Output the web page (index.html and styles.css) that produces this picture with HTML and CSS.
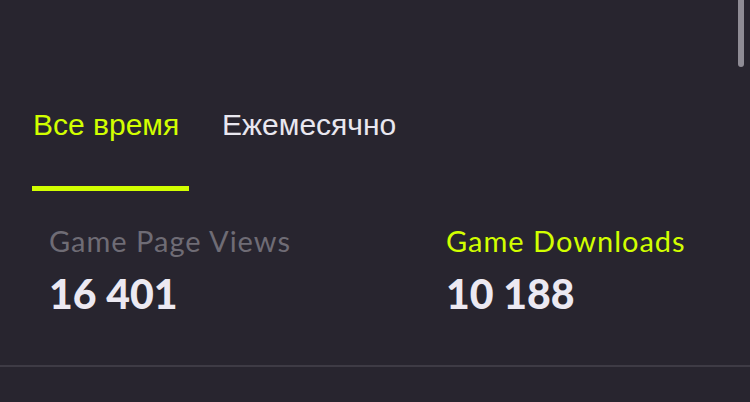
FILE: index.html
```html
<!DOCTYPE html>
<html lang="ru">
<head>
<meta charset="utf-8">
<link rel="stylesheet" href="styles.css">
</head>
<body>
<div class="page">
  <nav class="tabs">
    <div class="tab active">Все время</div>
    <div class="tab">Ежемесячно</div>
  </nav>
  <section class="stats">
    <div class="stat">
      <div class="label">Game Page Views</div>
      <div class="value">16 401</div>
    </div>
    <div class="stat">
      <div class="label lime">Game Downloads</div>
      <div class="value">10 188</div>
    </div>
  </section>
  <hr class="divider">
</div>
<div class="scrollbar"></div>
</body>
</html>
```
FILE: styles.css
```css
html, body {
  margin: 0;
  padding: 0;
  background: #28252f;
  height: 100%;
  overflow: hidden;
}
.page {
  padding-top: 100px;
}
.tabs {
  display: flex;
  padding-left: 32px;
  gap: 32px;
}
.tab {
  font-family: "Liberation Sans", Arial, sans-serif;
  font-size: 30px;
  line-height: 50px;
  color: #e9e7ef;
  padding: 0 0 36px 1px;
  border-bottom: 5px solid transparent;
}
.tab.active {
  color: #d2ff00;
  border-bottom-color: #d2ff00;
  width: 156px;
}
.stats {
  display: grid;
  grid-template-columns: 397px 1fr;
  padding-left: 49px;
  padding-top: 34px;
}
.label {
  font-family: Lato, sans-serif;
  font-size: 29px;
  letter-spacing: 1px;
  line-height: 34px;
  color: #6f6c75;
  margin-top: -1px;
}
.label.lime {
  color: #d2ff00;
}
.value {
  font-family: Lato, sans-serif;
  font-weight: 900;
  font-size: 41px;
  line-height: 48px;
  color: #ece9f2;
  margin-top: 12px;
}
.divider {
  margin: 47px 0 0 0;
  border: 0;
  height: 2px;
  background: #3e3b45;
}
.scrollbar {
  position: absolute;
  top: 0;
  left: 738px;
  width: 6px;
  height: 67px;
  border-radius: 0 0 3px 3px;
  background: #8f8c95;
}
```
